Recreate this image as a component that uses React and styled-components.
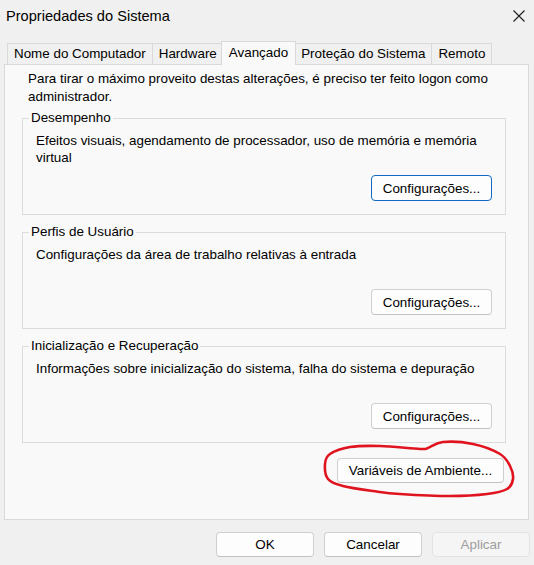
import React from "react";
import styled, { createGlobalStyle, css } from "styled-components";

const GlobalStyle = createGlobalStyle`
  html, body { margin: 0; padding: 0; }
  body {
    background: #f0f0f0;
    font-family: "Liberation Sans", Arial, sans-serif;
    color: #000;
  }
`;

const Window = styled.div`
  width: 534px;
  height: 565px;
  box-sizing: border-box;
  display: flex;
  flex-direction: column;
  background: #f0f0f0;
`;

const TitleBar = styled.div`
  height: 30px;
  box-sizing: border-box;
  padding: 1px 9px 0 6px;
  display: flex;
  align-items: center;
  justify-content: space-between;
  font-size: 14.6px;
`;

const CloseIcon = styled.svg`
  width: 12px;
  height: 12px;
  display: block;
`;

const Body = styled.div`
  padding: 11px 5px 0 4px;
  display: flex;
  flex-direction: column;
`;

const TabStrip = styled.div`
  height: 23px;
  display: flex;
  align-items: flex-end;
  padding-left: 3px;
`;

const Tab = styled.div`
  height: 21px;
  box-sizing: border-box;
  border: 1px solid #d9d9d9;
  border-bottom: none;
  margin-right: -1px;
  padding: 0 6px 1px;
  display: flex;
  align-items: center;
  background: #f0f0f0;
  font-size: 13.4px;
  white-space: nowrap;
  ${(p) =>
    p.$active &&
    css`
      height: 24px;
      margin: 0 -2px -1px -2px;
      padding: 0 7px 3px;
      background: #f9f9f9;
      position: relative;
      z-index: 1;
    `}
`;

const Panel = styled.div`
  height: 456px;
  box-sizing: border-box;
  border: 1px solid #d9d9d9;
  background: #f9f9f9;
  padding: 5px 22px 0 17px;
  display: flex;
  flex-direction: column;
`;

const Intro = styled.p`
  margin: 0 0 3px 6px;
  font-size: 13.4px;
  line-height: 18px;
`;

const Group = styled.fieldset`
  margin: ${(p) => (p.$first ? "0" : "8px 0 0")};
  padding: 0 13px 13px 6px;
  border: 1px solid #dcdcdc;
  min-width: 0;
`;

const Legend = styled.legend`
  padding: 0 2px;
  font-size: 13.4px;
  line-height: 18px;
`;

const GroupBody = styled.div`
  padding: 5px 0 0 7px;
  display: flex;
  flex-direction: column;
`;

const GroupText = styled.p`
  margin: 0;
  height: 34px;
  font-size: 13.4px;
  line-height: 17px;
`;

const ButtonRow = styled.div`
  margin-top: 9px;
  display: flex;
  justify-content: flex-end;
`;

const Button = styled.button`
  box-sizing: border-box;
  width: ${(p) => p.$w || 98}px;
  height: ${(p) => p.$h || 25}px;
  padding: 0;
  border: 1px solid #d0d0d0;
  border-bottom-color: #c2c2c2;
  border-radius: 4px;
  background: #fdfdfd;
  font-family: "Liberation Sans", Arial, sans-serif;
  font-size: 13.4px;
  color: #000;
  ${(p) =>
    p.$focused &&
    css`
      border-color: #1467c4;
    `}
  ${(p) =>
    p.disabled &&
    css`
      background: #f5f5f5;
      border-color: #e3e3e3;
      color: #9d9d9d;
    `}
`;

const EnvWrap = styled.div`
  position: relative;
  align-self: flex-end;
  margin: 15px 2px 0 0;
`;

const Scribble = styled.svg`
  position: absolute;
  left: -17px;
  top: -21px;
  width: 200px;
  height: 64px;
  pointer-events: none;
  overflow: visible;
`;

const Footer = styled.div`
  padding: 12px 4px 0 0;
  display: flex;
  justify-content: flex-end;
  gap: 10px;
`;

const pts = [
  [5, 27], [10, 17], [30, 10], [60, 9], [100, 12], [108, 11], [123, 5],
  [153, 7], [180, 17], [190, 29], [193, 42], [187, 52], [167, 57],
  [130, 59], [80, 57], [53, 54], [23, 49], [8, 42],
];

function smoothPath(p) {
  const n = p.length;
  let d = `M${p[0][0]},${p[0][1]}`;
  for (let i = 0; i < n; i++) {
    const p0 = p[(i - 1 + n) % n];
    const p1 = p[i];
    const p2 = p[(i + 1) % n];
    const p3 = p[(i + 2) % n];
    const c1 = [p1[0] + (p2[0] - p0[0]) / 6, p1[1] + (p2[1] - p0[1]) / 6];
    const c2 = [p2[0] - (p3[0] - p1[0]) / 6, p2[1] - (p3[1] - p1[1]) / 6];
    d += ` C${c1[0].toFixed(1)},${c1[1].toFixed(1)} ${c2[0].toFixed(1)},${c2[1].toFixed(1)} ${p2[0]},${p2[1]}`;
  }
  return d + "Z";
}

const groups = [
  {
    title: "Desempenho",
    text: (
      <>
        Efeitos visuais, agendamento de processador, uso de memória e memória
        <br />
        virtual
      </>
    ),
    focused: true,
  },
  {
    title: "Perfis de Usuário",
    text: "Configurações da área de trabalho relativas à entrada",
  },
  {
    title: "Inicialização e Recuperação",
    text: "Informações sobre inicialização do sistema, falha do sistema e depuração",
  },
];

const tabs = ["Nome do Computador", "Hardware", "Avançado", "Proteção do Sistema", "Remoto"];

export default function App() {
  return (
    <>
      <GlobalStyle />
      <Window>
        <TitleBar>
          <span>Propriedades do Sistema</span>
          <CloseIcon viewBox="0 0 12 12">
            <path d="M0.5 0.5 L11.5 11.5 M11.5 0.5 L0.5 11.5" stroke="#1c1c1c" strokeWidth="1.1" fill="none" />
          </CloseIcon>
        </TitleBar>
        <Body>
          <TabStrip>
            {tabs.map((t) => (
              <Tab key={t} $active={t === "Avançado"}>
                {t}
              </Tab>
            ))}
          </TabStrip>
          <Panel>
            <Intro>
              Para tirar o máximo proveito destas alterações, é preciso ter feito logon como
              <br />
              administrador.
            </Intro>
            {groups.map((g, i) => (
              <Group key={g.title} $first={i === 0}>
                <Legend>{g.title}</Legend>
                <GroupBody>
                  <GroupText>{g.text}</GroupText>
                  <ButtonRow>
                    <Button $w={121} $h={26} $focused={g.focused}>
                      Configurações...
                    </Button>
                  </ButtonRow>
                </GroupBody>
              </Group>
            ))}
            <EnvWrap>
              <Button $w={167} $h={25}>
                Variáveis de Ambiente...
              </Button>
              <Scribble viewBox="0 0 200 64">
                <path
                  d={smoothPath(pts)}
                  fill="none"
                  stroke="#e0141f"
                  strokeWidth="2.6"
                  strokeLinejoin="round"
                />
              </Scribble>
            </EnvWrap>
          </Panel>
        </Body>
        <Footer>
          <Button>OK</Button>
          <Button>Cancelar</Button>
          <Button disabled>Aplicar</Button>
        </Footer>
      </Window>
    </>
  );
}
